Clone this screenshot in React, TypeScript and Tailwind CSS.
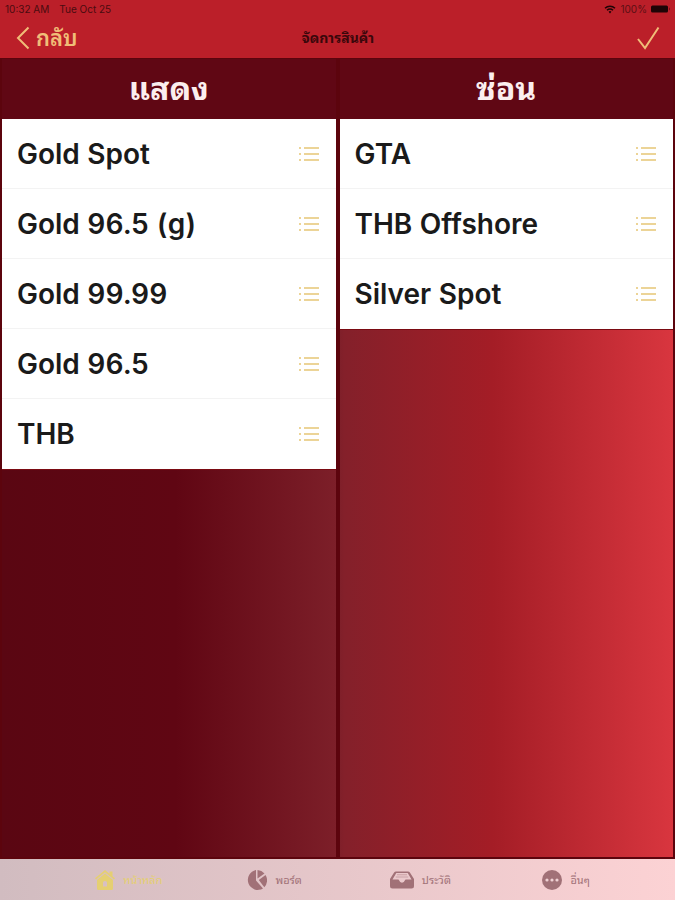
import React, { useState } from "react";

const shown = ["Gold Spot", "Gold 96.5 (g)", "Gold 99.99", "Gold 96.5", "THB"];
const hidden = ["GTA", "THB Offshore", "Silver Spot"];

const IcBack = () => (
  <svg width="14" height="24" viewBox="0 0 14 24" fill="none" stroke="currentColor" strokeWidth="2">
    <path d="M12.5 1.5 2 12l10.500 10.500" />
  </svg>
);

const IcCheck = () => (
  <svg width="24" height="24" viewBox="0 0 24 24" fill="none" stroke="currentColor" strokeWidth="2">
    <path d="M2 13 9 22 22.500 1.500" />
  </svg>
);

const IcList = () => (
  <svg width="20" height="16" viewBox="0 0 20 16" fill="currentColor">
    <path d="M0 1h2v2H0zM0 7h2v2H0zM0 13h2v2H0zM5 1h15v2H5zM5 7h15v2H5zM5 13h15v2H5z" />
  </svg>
);

const IcWifi = () => (
  <svg width="12" height="9" viewBox="0 0 12 9" fill="none" stroke="currentColor" strokeWidth="1.500">
    <path d="M1 3.200a7.200 7.200 0 0 1 10 0M3 5.300a4.300 4.300 0 0 1 6 0" />
    <path d="M4.600 6.800 6 8.500l1.400-1.700a2 2 0 0 0-2.800 0z" fill="currentColor" stroke="none" />
  </svg>
);

const IcBattery = () => (
  <svg width="20" height="8" viewBox="0 0 20 8" fill="currentColor">
    <rect x="0" y="0.500" width="17" height="7" rx="1.500" />
    <path d="M18 2.500c1 .3 1 2.700 0 3z" opacity=".6" />
  </svg>
);

const IcHome = () => (
  <svg width="20" height="20" viewBox="0 0 20 20" fill="currentColor">
    <path d="M10 0 0 8.200l1 1.300L10 2.300l9 7.200 1-1.300-2.500-2V1.500h-3v2.200z" />
    <path
      fillRule="evenodd"
      d="M10 3.500 2 10v8.500Q2 20 3.500 20h13q1.500 0 1.500-1.500V10zM8 16.500v-4q0-1.500 2-1.500t2 1.500v4z"
    />
  </svg>
);

const IcPie = () => (
  <svg width="20" height="20" viewBox="0 0 20 20" fill="currentColor">
    <path d="M9 .1V10.500l7 8A10 10 0 1 1 9 .1z" />
    <path d="M10.500 0a10 10 0 0 1 7 3.500L10.500 8.600z" />
    <path d="M18.500 5a10 10 0 0 1-1.200 12.300l-5.500-7.400z" />
  </svg>
);

const IcTray = () => (
  <svg width="24" height="18" viewBox="0 0 24 18" fill="currentColor">
    <path
      fillRule="evenodd"
      d="M6 .5h12q1.200 0 1.900 1L24 8v7q0 2.500-2.500 2.500h-19Q0 17.500 0 15V8l4.100-6.500Q4.800.5 6 .5zM6.300 2 2.500 8.500H8q1 0 1.200 1a2.900 2.900 0 0 0 5.600 0q.2-1 1.200-1h5.500L17.700 2z"
    />
    <path d="M7 3.300h10v1H7zM5.800 5.600h12.400v1H5.800z" opacity=".45" />
  </svg>
);

const IcMore = () => (
  <svg width="20" height="20" viewBox="0 0 20 20">
    <circle cx="10" cy="10" r="10" fill="currentColor" />
    <g fill="#efd0d3">
      <circle cx="5" cy="10" r="1.600" />
      <circle cx="10" cy="10" r="1.600" />
      <circle cx="15" cy="10" r="1.600" />
    </g>
  </svg>
);

const tabs = [
  { label: "หน้าหลัก", icon: <IcHome /> },
  { label: "พอร์ต", icon: <IcPie /> },
  { label: "ประวัติ", icon: <IcTray /> },
  { label: "อื่นๆ", icon: <IcMore /> },
];

const Column = ({ title, items }: { title: string; items: string[] }) => (
  <section className="flex-1">
    <h2 className="h-[60px] bg-[#600714] text-center text-[32px] leading-[60px] font-bold text-[#fbeeee]">
      {title}
    </h2>
    <ul className="bg-white border-b border-[#7a0a12]">
      {items.map((item, i) => (
        <li
          key={item}
          className={`flex items-center justify-between h-[70px] pl-[15px] pr-[17px] ${
            i < items.length - 1 ? "border-b border-[#f3f3f3]" : ""
          }`}
        >
          <span className="text-[28px] leading-[34px] font-semibold tabular-nums text-[#1a1a1a]">{item}</span>
          <button type="button" aria-label={item} className="text-[#ecd497]">
            <IcList />
          </button>
        </li>
      ))}
    </ul>
  </section>
);

const App = () => {
  const [tab, setTab] = useState(0);
  return (
    <div className="flex flex-col min-h-screen font-['Inter','Noto_Sans_Thai_Looped','Loma','Waree','Garuda',sans-serif] bg-[linear-gradient(to_right,#5a0612_0%,#600613_26%,#7d1f29_50%,#84202a_51%,#a41d26_73%,#d9363f_100%)]">
      <header className="bg-[#bb1f29]">
        <div className="flex justify-between h-[18px] items-center pl-[5px] pr-1 text-[10px] leading-[18px] text-[#4a0c10]">
          <div className="flex gap-[10px]">
            <span>10:32 AM</span>
            <span>Tue Oct 25</span>
          </div>
          <div className="flex items-center gap-1 text-[#1e0406]">
            <IcWifi />
            <span className="text-[#5a0f14]">100%</span>
            <IcBattery />
          </div>
        </div>
        <div className="grid grid-cols-3 items-center h-10 pl-4 pr-[15px] text-[#f0bd78]">
          <button type="button" className="flex items-center gap-[6px] text-[22px] leading-[30px] font-semibold">
            <IcBack />
            กลับ
          </button>
          <h1 className="text-center text-[14px] leading-5 font-bold text-[#3a070b]">จัดการสินค้า</h1>
          <button type="button" aria-label="บันทึก" className="justify-self-end">
            <IcCheck />
          </button>
        </div>
      </header>
      <main className="flex flex-1 border-x-2 border-t border-b-2 border-[#5c040d] divide-x-4 divide-[#5c040d]">
        <Column title="แสดง" items={shown} />
        <Column title="ซ่อน" items={hidden} />
      </main>
      <nav className="flex h-[41px] pl-[56px] pr-[36px] bg-linear-to-r from-[#d1bcc0] to-[#fcd2d4]">
        {tabs.map((t, i) => (
          <button
            type="button"
            key={t.label}
            onClick={() => setTab(i)}
            className={`flex flex-1 items-center justify-center gap-2 text-[11px] leading-5 ${
              tab == i ? "text-[#e5cf72]" : "text-[#a17177]"
            }`}
          >
            {t.icon}
            <span>{t.label}</span>
          </button>
        ))}
      </nav>
    </div>
  );
};

export default App;
